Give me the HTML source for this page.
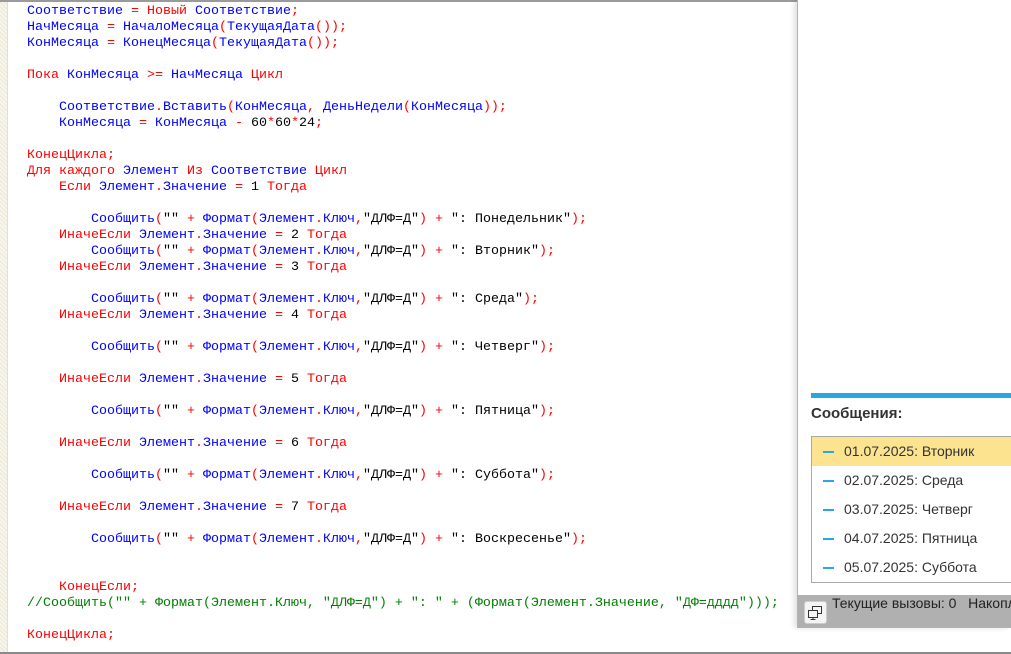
<!DOCTYPE html>
<html><head><meta charset="utf-8"><style>
*{margin:0;padding:0;box-sizing:border-box}
body{width:1011px;height:654px;position:relative;background:#fff;overflow:hidden}
#top{position:absolute;left:0;top:0;width:797px;height:2px;background:#9a9a9a}
#bot{position:absolute;left:0;top:652px;width:1011px;height:2px;background:#8a8a8a}
#gut{position:absolute;left:0;top:2px;width:8px;height:650px;background:repeating-linear-gradient(45deg,#ece8d8 0 1px,#f7f5ec 1px 3px);border-right:1px solid #e4e0cc}
.l{position:absolute;left:27px;height:16px;line-height:16px;font-family:"Liberation Mono",monospace;font-size:13.33px;white-space:pre;color:#0000ff;margin-top:2px}
.r{color:#ff0000}.k{color:#000}.g{color:#008000}
#panel{position:absolute;left:797px;top:0;width:214px;height:628px;border-left:1px solid #c8b76a;border-bottom:1px solid #c8b76a;background:#fff;box-shadow:-3px 0 5px rgba(0,0,0,.12)}
#bar{position:absolute;left:13px;top:393px;right:0;height:5px;background:#29a8df}
#tit{position:absolute;left:13px;top:405px;font:bold 15px "Liberation Sans",sans-serif;color:#333}
#list{position:absolute;left:13px;top:436px;width:210px;height:147px;border:1px solid #a8a8a8}
.row{height:29px;position:relative;font:14px "Liberation Sans",sans-serif;color:#333;line-height:29px;padding-left:32px}
.row:before{content:"";position:absolute;left:11px;top:14px;width:11px;height:2px;background:#29a8df}
.sel{background:#fbe38f}
#st{position:absolute;left:0;top:595px;width:214px;height:32px;background:#b0b0b0}
#btn{position:absolute;left:6px;top:6px;width:23px;height:23px;background:#f4f4f4;border:1px solid #ccc;border-radius:3px}
#stt{position:absolute;left:34px;top:0;line-height:30px;font:14px "Liberation Sans",sans-serif;color:#222;white-space:pre}
</style></head><body>
<div id="top"></div><div id="gut"></div>
<div class="l" style="top:2px">Соответствие <span class="r">=</span> <span class="r">Новый</span> Соответствие<span class="r">;</span></div>
<div class="l" style="top:18px">НачМесяца <span class="r">=</span> НачалоМесяца<span class="r">(</span>ТекущаяДата<span class="r">());</span></div>
<div class="l" style="top:34px">КонМесяца <span class="r">=</span> КонецМесяца<span class="r">(</span>ТекущаяДата<span class="r">());</span></div>
<div class="l" style="top:66px"><span class="r">Пока</span> КонМесяца <span class="r">&gt;=</span> НачМесяца <span class="r">Цикл</span></div>
<div class="l" style="top:98px">    Соответствие<span class="r">.</span>Вставить<span class="r">(</span>КонМесяца<span class="r">,</span> ДеньНедели<span class="r">(</span>КонМесяца<span class="r">));</span></div>
<div class="l" style="top:114px">    КонМесяца <span class="r">=</span> КонМесяца <span class="r">-</span> <span class="k">60</span><span class="r">*</span><span class="k">60</span><span class="r">*</span><span class="k">24</span><span class="r">;</span></div>
<div class="l r" style="top:146px">КонецЦикла;</div>
<div class="l" style="top:162px"><span class="r">Для каждого</span> Элемент <span class="r">Из</span> Соответствие <span class="r">Цикл</span></div>
<div class="l" style="top:178px">    <span class="r">Если</span> Элемент<span class="r">.</span>Значение <span class="r">=</span> <span class="k">1</span> <span class="r">Тогда</span></div>
<div class="l" style="top:210px">        Сообщить<span class="r">(</span><span class="k">""</span> <span class="r">+</span> Формат<span class="r">(</span>Элемент<span class="r">.</span>Ключ<span class="r">,</span><span class="k">"ДЛФ=Д"</span><span class="r">)</span> <span class="r">+</span> <span class="k">": Понедельник"</span><span class="r">);</span></div>
<div class="l" style="top:226px">    <span class="r">ИначеЕсли</span> Элемент<span class="r">.</span>Значение <span class="r">=</span> <span class="k">2</span> <span class="r">Тогда</span></div>
<div class="l" style="top:242px">        Сообщить<span class="r">(</span><span class="k">""</span> <span class="r">+</span> Формат<span class="r">(</span>Элемент<span class="r">.</span>Ключ<span class="r">,</span><span class="k">"ДЛФ=Д"</span><span class="r">)</span> <span class="r">+</span> <span class="k">": Вторник"</span><span class="r">);</span></div>
<div class="l" style="top:258px">    <span class="r">ИначеЕсли</span> Элемент<span class="r">.</span>Значение <span class="r">=</span> <span class="k">3</span> <span class="r">Тогда</span></div>
<div class="l" style="top:290px">        Сообщить<span class="r">(</span><span class="k">""</span> <span class="r">+</span> Формат<span class="r">(</span>Элемент<span class="r">.</span>Ключ<span class="r">,</span><span class="k">"ДЛФ=Д"</span><span class="r">)</span> <span class="r">+</span> <span class="k">": Среда"</span><span class="r">);</span></div>
<div class="l" style="top:306px">    <span class="r">ИначеЕсли</span> Элемент<span class="r">.</span>Значение <span class="r">=</span> <span class="k">4</span> <span class="r">Тогда</span></div>
<div class="l" style="top:338px">        Сообщить<span class="r">(</span><span class="k">""</span> <span class="r">+</span> Формат<span class="r">(</span>Элемент<span class="r">.</span>Ключ<span class="r">,</span><span class="k">"ДЛФ=Д"</span><span class="r">)</span> <span class="r">+</span> <span class="k">": Четверг"</span><span class="r">);</span></div>
<div class="l" style="top:370px">    <span class="r">ИначеЕсли</span> Элемент<span class="r">.</span>Значение <span class="r">=</span> <span class="k">5</span> <span class="r">Тогда</span></div>
<div class="l" style="top:402px">        Сообщить<span class="r">(</span><span class="k">""</span> <span class="r">+</span> Формат<span class="r">(</span>Элемент<span class="r">.</span>Ключ<span class="r">,</span><span class="k">"ДЛФ=Д"</span><span class="r">)</span> <span class="r">+</span> <span class="k">": Пятница"</span><span class="r">);</span></div>
<div class="l" style="top:434px">    <span class="r">ИначеЕсли</span> Элемент<span class="r">.</span>Значение <span class="r">=</span> <span class="k">6</span> <span class="r">Тогда</span></div>
<div class="l" style="top:466px">        Сообщить<span class="r">(</span><span class="k">""</span> <span class="r">+</span> Формат<span class="r">(</span>Элемент<span class="r">.</span>Ключ<span class="r">,</span><span class="k">"ДЛФ=Д"</span><span class="r">)</span> <span class="r">+</span> <span class="k">": Суббота"</span><span class="r">);</span></div>
<div class="l" style="top:498px">    <span class="r">ИначеЕсли</span> Элемент<span class="r">.</span>Значение <span class="r">=</span> <span class="k">7</span> <span class="r">Тогда</span></div>
<div class="l" style="top:530px">        Сообщить<span class="r">(</span><span class="k">""</span> <span class="r">+</span> Формат<span class="r">(</span>Элемент<span class="r">.</span>Ключ<span class="r">,</span><span class="k">"ДЛФ=Д"</span><span class="r">)</span> <span class="r">+</span> <span class="k">": Воскресенье"</span><span class="r">);</span></div>
<div class="l r" style="top:578px">    КонецЕсли;</div>
<div class="l g" style="top:594px">//Сообщить("" + Формат(Элемент.Ключ, "ДЛФ=Д") + ": " + (Формат(Элемент.Значение, "ДФ=дддд")));</div>
<div class="l r" style="top:626px">КонецЦикла;</div>
<div id="panel">
<div id="bar"></div>
<div id="tit">Сообщения:</div>
<div id="list">
<div class="row sel">01.07.2025: Вторник</div>
<div class="row">02.07.2025: Среда</div>
<div class="row">03.07.2025: Четверг</div>
<div class="row">04.07.2025: Пятница</div>
<div class="row">05.07.2025: Суббота</div>
</div>
<div id="st"><div id="btn"><svg width="21" height="21" viewBox="0 0 21 21" fill="none" stroke="#333" stroke-width="1"><rect x="7.5" y="4.5" width="9" height="7"/><rect x="3.5" y="8.5" width="9" height="7" fill="#f4f4f4"/><path d="M8 15.5v2M5.5 17.5h5"/></svg></div><div id="stt">Текущие вызовы: 0   Накопленные</div></div>
</div>
<div id="bot"></div>
</body></html>
